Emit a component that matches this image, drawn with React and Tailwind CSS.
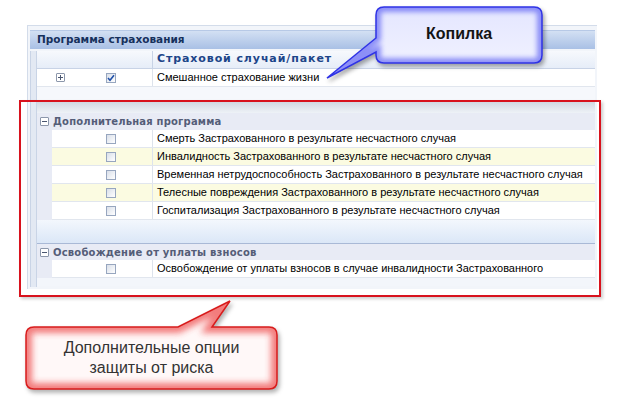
import React from 'react';

const extraRisks = [
  'Смерть Застрахованного в результате несчастного случая',
  'Инвалидность Застрахованного в результате несчастного случая',
  'Временная нетрудоспособность Застрахованного в результате несчастного случая',
  'Телесные повреждения Застрахованного в результате несчастного случая',
  'Госпитализация Застрахованного в результате несчастного случая',
];

function Checkbox({ checked }) {
  return (
    <div className="w-[10px] h-[10px] shrink-0 border border-[#97a6bf] bg-gradient-to-br from-[#d9dfe9] to-white flex items-center justify-center">
      {checked && (
        <svg width="8" height="8" viewBox="0 0 8 8">
          <path d="M1 4 L3 6.2 L7 1.2" fill="none" stroke="#1f4fa8" strokeWidth="1.6" />
        </svg>
      )}
    </div>
  );
}

function Toggle({ open }) {
  return (
    <div className="w-[9px] h-[9px] shrink-0 border border-[#8c97ab] bg-white rounded-[1px] flex items-center justify-center">
      <svg width="7" height="7" viewBox="0 0 7 7">
        <path d="M1 3.5 H6" stroke="#4b5670" strokeWidth="1" />
        {!open && <path d="M3.5 1 V6" stroke="#4b5670" strokeWidth="1" />}
      </svg>
    </div>
  );
}

function GroupHeader({ title, line }) {
  return (
    <div className={`flex items-center h-[17px] bg-[#e8ebf5] pl-[3px] ${line ? 'border-t border-[#a9b9d6]' : ''}`}>
      <Toggle open />
      <span className="ml-[4px] font-bold text-[#545d78] whitespace-nowrap tracking-[0.2px]">{title}</span>
    </div>
  );
}

function RiskRow({ text, alt }) {
  return (
    <div className="flex h-[18px] overflow-hidden">
      <div className="w-[15px] shrink-0 bg-[#e8ebf5]" />
      <div className={`flex flex-1 min-w-0 border-b border-[#e1e6ee] ${alt ? 'bg-[#fbfbe1]' : 'bg-white'}`}>
        <div className="w-[101px] shrink-0 flex items-center pl-[54px] border-r border-[#dde3ec]">
          <Checkbox />
        </div>
        <div className="pl-[4px] flex items-center text-black whitespace-nowrap font-['Liberation_Sans',Arial,sans-serif] text-[11px]">
          {text}
        </div>
      </div>
    </div>
  );
}

export default function App() {
  return (
    <div className="relative w-[617px] h-[399px] bg-white overflow-hidden font-['DejaVu_Sans',sans-serif] text-[10px]">
      {/* Grid panel */}
      <div className="ml-[27px] mt-[25px] w-[570px] h-[264px] bg-[#f2f5fa] border-l border-t border-[#d3dcea] pl-[2px] pt-[4px]">
        <div className="h-[19px] w-[565px] bg-gradient-to-b from-[#d3e0f3] to-[#a9c0e5] border-t border-[#b7c9e6] flex items-center pl-[7px] font-bold text-[10.5px] text-[#16305c]">
          Программа страхования
        </div>
        <div className="flex mt-[2px]">
          <div className="w-[7px] shrink-0 h-[236px] border-l border-r border-[#c9d4e6] bg-[#e3e9f3]" />
          <div className="w-[558px] shrink-0">
            {/* column header */}
            <div className="flex h-[18px] bg-gradient-to-b from-[#f7f9fd] to-[#e6edf8] border-b border-[#c8d3e6]">
              <div className="w-[116px] shrink-0 border-r border-[#c8d3e6]" />
              <div className="pl-[4px] flex items-center font-bold text-[11px] tracking-[0.9px] text-[#1d4589]">
                Страховой случай/пакет
              </div>
            </div>
            {/* base product row */}
            <div className="flex h-[18px] bg-white border-b border-[#e1e6ee]">
              <div className="w-[116px] shrink-0 flex items-center pl-[19px] border-r border-[#dde3ec]">
                <Toggle />
                <div className="ml-[41px]">
                  <Checkbox checked />
                </div>
              </div>
              <div className="pl-[4px] flex items-center text-black font-['Liberation_Sans',Arial,sans-serif] text-[11px]">
                Смешанное страхование жизни
              </div>
            </div>
            <div className="h-[14px] bg-[#f6f8fc]" />
            <div className="h-[12px] bg-gradient-to-b from-[#cfd6e0] to-[#eef2f7]" />

            <GroupHeader title="Дополнительная программа" />
            {extraRisks.map((r, i) => (
              <RiskRow key={r} text={r} alt={i % 2 === 1} />
            ))}
            <div className="h-[23px] bg-gradient-to-b from-[#f3f7fd] to-[#dbe7f7]" />

            <GroupHeader title="Освобождение от уплаты взносов" line />
            <RiskRow text="Освобождение от уплаты взносов в случае инвалидности Застрахованного" />
            <div className="h-[8px] bg-[#f3f6fb]" />
          </div>
        </div>
      </div>

      {/* red annotation frame */}
      <div className="absolute left-[19px] top-[100px] w-[582px] h-[197px] border-2 border-[#d8121d] shadow-[2px_2px_3px_rgba(0,0,0,0.2)]" />

      {/* blue callout */}
      <svg className="absolute left-[320px] top-0 drop-shadow-[2px_3px_2px_rgba(0,0,0,0.35)]" width="232" height="85" viewBox="0 0 232 85">
        <defs>
          <clipPath id="blueClip">
            <path d="M64 7 H214 Q222 7 222 15 V55 Q222 63 214 63 H64 Q56 63 56 55 V52 L7 78 L56 38 V15 Q56 7 64 7 Z" />
          </clipPath>
          <linearGradient id="blueFill" x1="0" y1="0" x2="0" y2="1">
            <stop offset="0" stopColor="#e4e6ff" />
            <stop offset="1" stopColor="#f3f4ff" />
          </linearGradient>
          <filter id="blueBlur"><feGaussianBlur stdDeviation="2.5" /></filter>
        </defs>
        <path d="M64 7 H214 Q222 7 222 15 V55 Q222 63 214 63 H64 Q56 63 56 55 V52 L7 78 L56 38 V15 Q56 7 64 7 Z" fill="url(#blueFill)" />
        <g clipPath="url(#blueClip)">
          <path d="M64 7 H214 Q222 7 222 15 V55 Q222 63 214 63 H64 Q56 63 56 55 V52 L7 78 L56 38 V15 Q56 7 64 7 Z" fill="none" stroke="#4b4ff2" strokeWidth="10" opacity="0.6" filter="url(#blueBlur)" />
        </g>
        <path d="M64 7 H214 Q222 7 222 15 V55 Q222 63 214 63 H64 Q56 63 56 55 V52 L7 78 L56 38 V15 Q56 7 64 7 Z" fill="none" stroke="#2f33e6" strokeWidth="1.5" />
      </svg>
      <div className="absolute left-[376px] top-[7px] w-[166px] h-[54px] flex items-center justify-center font-['Liberation_Sans',Arial,sans-serif] font-bold text-[16px] text-[#141414]">
        Копилка
      </div>

      {/* red callout */}
      <svg className="absolute left-[20px] top-[295px] drop-shadow-[2px_3px_2px_rgba(0,0,0,0.3)]" width="265" height="100" viewBox="0 0 265 100">
        <defs>
          <clipPath id="redClip">
            <path d="M14 32 H158 L210 6 L192 32 H249 Q257 32 257 40 V86 Q257 94 249 94 H14 Q6 94 6 86 V40 Q6 32 14 32 Z" />
          </clipPath>
          <filter id="redBlur"><feGaussianBlur stdDeviation="3" /></filter>
        </defs>
        <path d="M14 32 H158 L210 6 L192 32 H249 Q257 32 257 40 V86 Q257 94 249 94 H14 Q6 94 6 86 V40 Q6 32 14 32 Z" fill="#fff8f8" />
        <g clipPath="url(#redClip)">
          <path d="M14 32 H158 L210 6 L192 32 H249 Q257 32 257 40 V86 Q257 94 249 94 H14 Q6 94 6 86 V40 Q6 32 14 32 Z" fill="none" stroke="#ec3b3b" strokeWidth="12" opacity="0.65" filter="url(#redBlur)" />
        </g>
        <path d="M14 32 H158 L210 6 L192 32 H249 Q257 32 257 40 V86 Q257 94 249 94 H14 Q6 94 6 86 V40 Q6 32 14 32 Z" fill="none" stroke="#d81c1c" strokeWidth="1.5" />
      </svg>
      <div className="absolute left-[26px] top-[327px] w-[251px] h-[62px] flex flex-col items-center justify-center font-['Liberation_Sans',Arial,sans-serif] text-[16px] leading-[20px] text-[#333]">
        <span>Дополнительные опции</span>
        <span>защиты от риска</span>
      </div>
    </div>
  );
}
